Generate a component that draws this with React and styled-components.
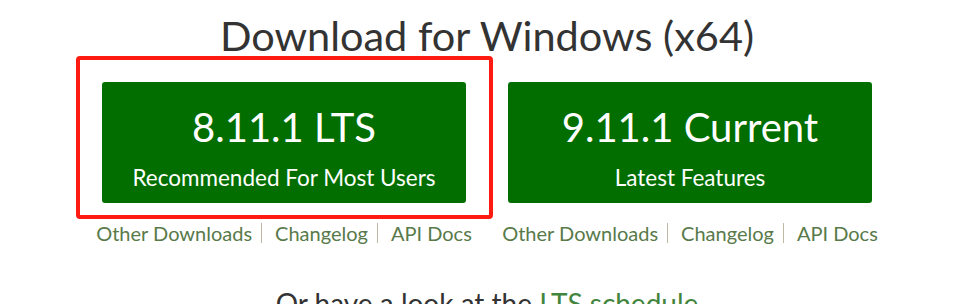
import React from "react";
import styled, { createGlobalStyle } from "styled-components";

const Global = createGlobalStyle`
  html, body { margin: 0; padding: 0; background: #fff; }
  body { font-family: "Lato", "Open Sans", sans-serif; color: #333; overflow: hidden; }
`;

const Page = styled.div`
  display: flex;
  flex-direction: column;
  align-items: center;
  padding-left: 18px;
  padding-top: 10px;
`;

const Heading = styled.h2`
  margin: 0;
  font-size: 41.5px;
  font-weight: 400;
  line-height: 50px;
  color: #333;
`;

const Columns = styled.div`
  display: flex;
  gap: 42px;
  margin-top: 22px;
`;

const Column = styled.div`
  width: 364px;
  display: flex;
  flex-direction: column;
  align-items: center;
`;

const ButtonWrap = styled.div`
  position: relative;
`;

const Highlight = styled.div`
  position: absolute;
  left: -26px;
  top: -26px;
  right: -27px;
  bottom: -16px;
  border: 4px solid #ff1a12;
  border-radius: 4px;
  pointer-events: none;
`;

const Button = styled.a`
  box-sizing: border-box;
  width: 364px;
  height: 121px;
  background: #026e00;
  border-radius: 3px;
  color: #fff;
  text-decoration: none;
  display: flex;
  flex-direction: column;
  align-items: center;
  padding-top: 21px;
`;

const Version = styled.span`
  font-size: 40px;
  line-height: 48px;
`;

const Subtitle = styled.span`
  font-size: 22.5px;
  line-height: 28px;
  margin-top: 13px;
`;

const Links = styled.div`
  display: flex;
  align-items: center;
  white-space: nowrap;
  margin-top: 17px;
  font-size: 20px;
  line-height: 26px;
`;

const Link = styled.a`
  color: #587a4a;
  text-decoration: none;
`;

const Sep = styled.span`
  display: inline-block;
  width: 1px;
  height: 20px;
  background: #bfb6a6;
  margin: 0 13px 0 9px;
`;

const Footer = styled.p`
  margin: 41px 0 0;
  font-size: 28px;
  line-height: 32px;
  white-space: nowrap;
  color: #333;
`;

const Green = styled.a`
  color: #43853d;
  text-decoration: none;
`;

const Col = ({ version, sub, highlight }) => (
  <Column>
    <ButtonWrap>
      {highlight && <Highlight />}
      <Button href="#">
        <Version>{version}</Version>
        <Subtitle>{sub}</Subtitle>
      </Button>
    </ButtonWrap>
    <Links>
      <Link href="#">Other Downloads</Link>
      <Sep />
      <Link href="#">Changelog</Link>
      <Sep />
      <Link href="#">API Docs</Link>
    </Links>
  </Column>
);

export default function App() {
  return (
    <>
      <Global />
      <Page>
        <Heading>Download for Windows (x64)</Heading>
        <Columns>
          <Col version="8.11.1 LTS" sub="Recommended For Most Users" highlight />
          <Col version="9.11.1 Current" sub="Latest Features" />
        </Columns>
        <Footer>
          Or have a look at the <Green href="#">LTS schedule</Green>
        </Footer>
      </Page>
    </>
  );
}
